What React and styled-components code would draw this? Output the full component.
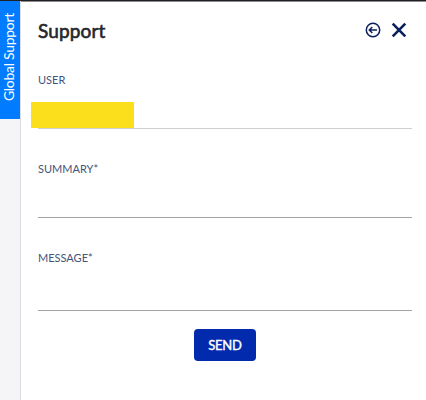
import React from "react";
import styled, { createGlobalStyle } from "styled-components";

const GlobalStyle = createGlobalStyle`
  * {
    box-sizing: border-box;
  }

  body {
    margin: 0;
    background-color: #ffffff;
    font-family: Lato, "Open Sans", sans-serif;
  }
`;

const Layout = styled.div`
  display: flex;
  height: 400px;
  border-top: 1px solid #1f1f24;
  overflow: hidden;
`;

const SideRail = styled.div`
  width: 21px;
  background-color: #f5f5f7;
  border-right: 1px solid #dcdce0;
`;

const SideTab = styled.div`
  display: flex;
  align-items: center;
  justify-content: center;
  width: 20px;
  height: 118px;
  padding-top: 6px;
  padding-right: 1px;
  background-color: #017bff;
  color: #ffffff;
  font-size: 14px;
  letter-spacing: -0.3px;
  line-height: 18px;
  white-space: nowrap;
  writing-mode: vertical-rl;
  transform: rotate(180deg);
  padding: 6px 0 0 2px;
`;

const Panel = styled.div`
  flex: 1;
  padding: 16px 14px 0 17px;
  box-shadow: inset 0 1px 0 #8c8c90;
`;

const Header = styled.div`
  display: flex;
  align-items: center;
  justify-content: space-between;
  height: 26px;
`;

const Title = styled.h1`
  margin: 0;
  color: #26262a;
  font-family: Lato, sans-serif;
  font-size: 19px;
  font-weight: 400;
  letter-spacing: 0.15px;
  -webkit-text-stroke: 0.6px #26262a;
`;

const HeaderIcons = styled.div`
  display: flex;
  align-items: center;
  gap: 10px;
  padding-right: 5px;
`;

const Form = styled.form`
  display: flex;
  flex-direction: column;
  gap: 32px;
  padding-top: 29px;
`;

const Field = styled.div`
  display: flex;
  flex-direction: column;
  height: ${(props) => props.$height}px;
  border-bottom: 1px solid ${(props) => props.$line};
`;

const Label = styled.label`
  color: #44547a;
  font-size: 11px;
  line-height: 16px;
`;

const UserMark = styled.div`
  width: 103px;
  height: 26px;
  margin: 14px 0 0 -7px;
  background-color: #fcdf1c;
`;

const SendButton = styled.button`
  align-self: center;
  width: 62px;
  height: 32px;
  margin-top: -14px;
  padding: 0;
  border: 0;
  border-radius: 4px;
  background-color: #022aac;
  color: #ffffff;
  font-family: Lato, sans-serif;
  font-size: 13px;
  font-weight: 400;
  letter-spacing: -0.2px;
  -webkit-text-stroke: 0.4px #ffffff;
`;

function BackIcon() {
  return (
    <svg width="16" height="16" viewBox="0 0 16 16" fill="none" stroke="#0b1f5c" strokeWidth="1.5">
      <circle cx="8" cy="8" r="6.7" />
      <path d="M12 8H4.5M7.3 5L4.3 8L7.3 11" />
    </svg>
  );
}

function CloseIcon() {
  return (
    <svg width="16" height="16" viewBox="0 0 16 16" fill="none" stroke="#0b1f5c" strokeWidth="2.6">
      <path d="M1.7 1.7L14.3 14.3M14.3 1.7L1.7 14.3" />
    </svg>
  );
}

function App() {
  return (
    <>
      <GlobalStyle />
      <Layout>
        <SideRail>
          <SideTab>Global Support</SideTab>
        </SideRail>
        <Panel>
          <Header>
            <Title>Support</Title>
            <HeaderIcons>
              <BackIcon />
              <CloseIcon />
            </HeaderIcons>
          </Header>
          <Form>
            <Field $height={57} $line="#cfcfcf">
              <Label>USER</Label>
              <UserMark />
            </Field>
            <Field $height={57} $line="#a3a3a3">
              <Label>SUMMARY*</Label>
            </Field>
            <Field $height={61} $line="#a3a3a3">
              <Label>MESSAGE*</Label>
            </Field>
            <SendButton type="button">SEND</SendButton>
          </Form>
        </Panel>
      </Layout>
    </>
  );
}

export default App;
